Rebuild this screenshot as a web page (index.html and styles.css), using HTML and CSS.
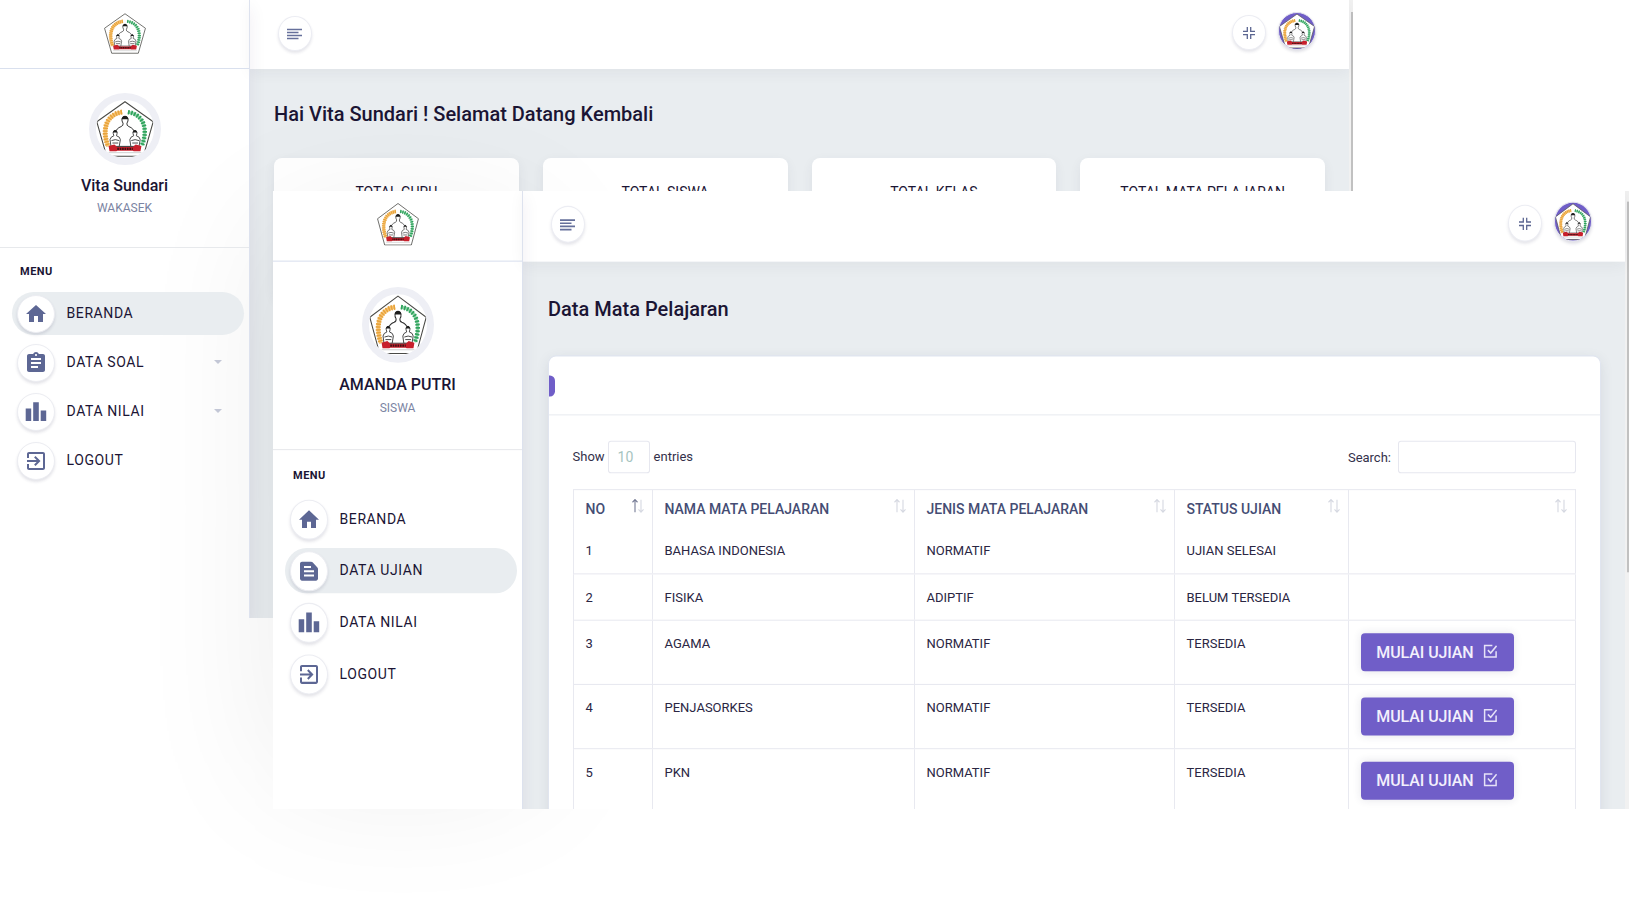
FILE: index.html
```html
<!DOCTYPE html>
<html lang="id">
<head>
<meta charset="utf-8">
<title>Ujian Online</title>
<link rel="stylesheet" href="styles.css">
</head>
<body>
<svg class="defs" width="0" height="0">
  <symbol id="crest" viewBox="0 0 60 58">
    <path d="M30 .8 59.200 21.500 49 57.200H11L.8 21.500Z" fill="#fff" stroke="#4a4a46" stroke-width="1.100"/>
    <path d="M27 11.500C10 14 6 30 12.500 47" fill="none" stroke="#f6c374" stroke-width="4"/>
    <path d="M27 11.500C10 14 6 30 12.500 47" fill="none" stroke="#e8a33a" stroke-width="5.200" stroke-dasharray="1.500 1.300"/>
    <path d="M33 11.500C50 14 54 30 47.500 46" fill="none" stroke="#8fd0a8" stroke-width="3"/>
    <path d="M33 11.500C50 14 54 30 47.500 46" fill="none" stroke="#2fa35c" stroke-width="4.600" stroke-dasharray="1.700 1.500"/>
    <g stroke-linejoin="round">
      <path d="M18.500 47C19 35 19 29 26 26.500Q28.500 25.500 28 23C26 20 26.500 16 30 16S34 20 32 23Q31.500 25.500 34 26.500C41 29 41 35 41.500 47Z" fill="#fff" stroke="#2c2c2c" stroke-width="1"/>
      <path d="M26.600 18.800C27 14 33 14 33.400 18.800Z" fill="#1d1d1d"/>
      <g fill="#fff" stroke="#333" stroke-width=".9">
        <path d="M15.500 47 14.500 40Q15 37 18.500 36 16.500 31 19.800 30.500 23 31 21.200 36 25 37 25.200 40L24 47Z"/>
        <path d="M36 47 35 40Q35.500 37 39 36 37 31 40.300 30.500 43.500 31 41.700 36 45.500 37 45.700 40L44.500 47Z"/>
        <path d="M16 41q4-2 8 0M36.500 41q4-2 8 0M17 43.500h6M37.500 43.500h6"/>
      </g>
      <path d="M17.300 32.500Q19.800 27.500 22.300 32.500ZM37.800 32.500Q40.300 27.500 42.800 32.500Z" fill="#1d1d1d"/>
    </g>
    <path d="M13 46.500 19 45 22 47.500H38L41 45 47 46.500 46 52H39L38 51.500H22L21 52H14Z" fill="#c8202c"/>
    <path d="M22 49.500H38" stroke="#3c1114" stroke-width="2.200" stroke-dasharray="1.700 .8"/>
    <path d="M13 53.500H47" stroke="#aaa" stroke-width=".6"/>
  </symbol>
  <symbol id="home" viewBox="0 0 24 24"><path d="M10 20v-6h4v6h5v-8h3L12 3 2 12h3v8z"/></symbol>
  <symbol id="clipboard" viewBox="0 0 24 24"><path d="M19 3h-4.180C14.400 1.840 13.300 1 12 1c-1.300 0-2.400.84-2.820 2H5c-1.100 0-2 .9-2 2v14c0 1.100.9 2 2 2h14c1.100 0 2-.9 2-2V5c0-1.100-.9-2-2-2zm-7 0c.55 0 1 .45 1 1s-.45 1-1 1-1-.45-1-1 .45-1 1-1zm2 14H7v-2h7v2zm3-4H7v-2h10v2zm0-4H7V7h10v2z"/></symbol>
  <symbol id="chart" viewBox="0 0 24 24"><path d="M1.700 8.600h5.500V21H1.700zM9.200 2.200h5.600V21H9.200zM16.700 10.500h5.500V21h-5.500z"/></symbol>
  <symbol id="exit" viewBox="0 0 24 24"><path d="M10.090 15.590 11.500 17l5-5-5-5-1.410 1.410L12.670 11H3v2h9.670l-2.580 2.590zM19 3H5c-1.110 0-2 .9-2 2v4h2V5h14v14H5v-4H3v4c0 1.100.89 2 2 2h14c1.100 0 2-.9 2-2V5c0-1.100-.9-2-2-2z"/></symbol>
  <symbol id="doc" viewBox="0 0 24 24"><path d="M20.410 8.410l-4.830-4.830c-.37-.37-.88-.58-1.410-.58H5c-1.100 0-2 .9-2 2v14c0 1.100.9 2 2 2h14c1.100 0 2-.9 2-2V9.830c0-.53-.21-1.040-.59-1.420zM7 7h7v2H7V7zm10 10H7v-2h10v2zm0-4H7v-2h10v2z"/></symbol>
  <symbol id="lines" viewBox="0 0 15 12"><path d="M0 1.500h15M0 4.500h11.500M0 7.500h15M0 10.500h11.500" stroke="#66709b" stroke-width="1.600"/></symbol>
  <symbol id="shrink" viewBox="0 0 12 12"><path d="M0 4.300h4.300V0M7.700 0v4.300H12M0 7.700h4.300V12M7.700 12V7.700H12" fill="none" stroke="#5b6691" stroke-width="1.300"/></symbol>
  <symbol id="check" viewBox="0 0 15 15"><path d="M9.500 1.700H1.200v11.600h12.300V7.500M4.700 6.300l3 3 6.300-7.300" fill="none" stroke="#e6e2f7" stroke-width="1.600"/></symbol>
  <symbol id="sort" viewBox="0 0 12 14"><path stroke="currentColor" d="M3 13V1M.5 3.500 3 1l2.500 2.500"/><path d="M9 1v11.500M6.500 10.300 9 12.800l2.500-2.500"/></symbol>
</svg>

<div class="window window-back">
  <div class="screen">
    <aside class="sidebar">
      <div class="brand"><svg class="brand-logo"><use href="#crest"/></svg></div>
      <div class="profile">
        <div class="photo"><svg><use href="#crest"/></svg></div>
        <div class="name">Vita Sundari</div>
        <div class="role">WAKASEK</div>
      </div>
      <div class="menu-title">MENU</div>
      <nav class="menu">
        <a class="item active"><span class="bubble"><svg><use href="#home"/></svg></span><span class="label">BERANDA</span></a>
        <a class="item"><span class="bubble"><svg><use href="#clipboard"/></svg></span><span class="label">DATA SOAL</span><i class="caret"></i></a>
        <a class="item"><span class="bubble"><svg><use href="#chart"/></svg></span><span class="label">DATA NILAI</span><i class="caret"></i></a>
        <a class="item"><span class="bubble"><svg><use href="#exit"/></svg></span><span class="label">LOGOUT</span></a>
      </nav>
    </aside>
    <main class="content">
      <header class="topbar">
        <span class="round"><svg class="i-lines"><use href="#lines"/></svg></span>
        <div class="tools">
          <span class="round"><svg class="i-shrink"><use href="#shrink"/></svg></span>
          <span class="user"><svg><use href="#crest"/></svg></span>
        </div>
      </header>
      <h1 class="title">Hai Vita Sundari ! Selamat Datang Kembali</h1>
      <div class="stats">
        <div class="stat">TOTAL GURU</div>
        <div class="stat">TOTAL SISWA</div>
        <div class="stat">TOTAL KELAS</div>
        <div class="stat">TOTAL MATA PELAJARAN</div>
      </div>
    </main>
    <div class="scrollbar"><div class="thumb"></div></div>
  </div>
</div>

<div class="glow"></div>

<div class="window window-front">
  <div class="screen">
    <aside class="sidebar">
      <div class="brand"><svg class="brand-logo"><use href="#crest"/></svg></div>
      <div class="profile">
        <div class="photo"><svg><use href="#crest"/></svg></div>
        <div class="name">AMANDA PUTRI</div>
        <div class="role">SISWA</div>
      </div>
      <div class="menu-title">MENU</div>
      <nav class="menu">
        <a class="item"><span class="bubble"><svg><use href="#home"/></svg></span><span class="label">BERANDA</span></a>
        <a class="item active"><span class="bubble"><svg><use href="#doc"/></svg></span><span class="label">DATA UJIAN</span></a>
        <a class="item"><span class="bubble"><svg><use href="#chart"/></svg></span><span class="label">DATA NILAI</span></a>
        <a class="item"><span class="bubble"><svg><use href="#exit"/></svg></span><span class="label">LOGOUT</span></a>
      </nav>
    </aside>
    <main class="content">
      <header class="topbar">
        <span class="round"><svg class="i-lines"><use href="#lines"/></svg></span>
        <div class="tools">
          <span class="round"><svg class="i-shrink"><use href="#shrink"/></svg></span>
          <span class="user"><svg><use href="#crest"/></svg></span>
        </div>
      </header>
      <h1 class="title">Data Mata Pelajaran</h1>
      <section class="card">
        <div class="card-head"><span class="chip"></span></div>
        <div class="card-body">
          <div class="filters">
            <div class="length"><span class="word">Show</span><span class="select">10</span><span class="word">entries</span></div>
            <div class="search">Search: <input class="search-box" type="text"></div>
          </div>
          <table class="grid">
            <colgroup><col class="c-no"><col class="c-name"><col class="c-kind"><col class="c-status"><col></colgroup>
            <thead>
              <tr>
                <th class="sorted"><div class="th">NO<svg><use href="#sort"/></svg></div></th>
                <th><div class="th">NAMA MATA PELAJARAN<svg><use href="#sort"/></svg></div></th>
                <th><div class="th">JENIS MATA PELAJARAN<svg><use href="#sort"/></svg></div></th>
                <th><div class="th">STATUS UJIAN<svg><use href="#sort"/></svg></div></th>
                <th><div class="th"><span></span><svg><use href="#sort"/></svg></div></th>
              </tr>
            </thead>
            <tbody>
              <tr><td>1</td><td>BAHASA INDONESIA</td><td>NORMATIF</td><td>UJIAN SELESAI</td><td></td></tr>
              <tr><td>2</td><td>FISIKA</td><td>ADIPTIF</td><td>BELUM TERSEDIA</td><td></td></tr>
              <tr class="tall"><td>3</td><td>AGAMA</td><td>NORMATIF</td><td>TERSEDIA</td><td><a class="btn">MULAI UJIAN<svg><use href="#check"/></svg></a></td></tr>
              <tr class="tall"><td>4</td><td>PENJASORKES</td><td>NORMATIF</td><td>TERSEDIA</td><td><a class="btn">MULAI UJIAN<svg><use href="#check"/></svg></a></td></tr>
              <tr class="tall"><td>5</td><td>PKN</td><td>NORMATIF</td><td>TERSEDIA</td><td><a class="btn">MULAI UJIAN<svg><use href="#check"/></svg></a></td></tr>
            </tbody>
          </table>
        </div>
      </section>
    </main>
    <div class="scrollbar"><div class="thumb"></div></div>
  </div>
</div>
</body>
</html>
```
FILE: styles.css
```css
* { box-sizing: border-box; }
body {
  margin: 0;
  width: 1640px;
  height: 906px;
  position: relative;
  overflow: hidden;
  background: #fff;
  font-family: Roboto, "Liberation Sans", sans-serif;
  color: #1b1534;
}
svg { display: block; }
.defs { position: absolute; }

/* Overlapping windows */
.window { position: absolute; overflow: hidden; height: 618px; }
.window-back { left: 0; top: 0; width: 1353px; }
.window-front { left: 273px; top: 191px; width: 1356px; }
.glow {
  position: absolute;
  left: 273px;
  top: 221px;
  width: 260px;
  height: 560px;
  box-shadow: 0 0 140px rgba(0, 0, 0, .08);
}
.screen { display: flex; height: 618px; background: #fff; }
.window-front .screen {
  transform: scaleY(1.053);
  transform-origin: 0 0;
  margin-top: -2.5px;
}

/* Sidebar */
.sidebar {
  width: 250px;
  flex: none;
  border-right: 1px solid #dde2ee;
  position: relative;
  z-index: 2;
  box-shadow: 0 8px 17px rgba(50, 30, 80, .07);
}
.brand {
  height: 69px;
  border-bottom: 1px solid #d9e0ee;
  display: flex;
  justify-content: center;
  padding-top: 13px;
}
.brand-logo { width: 42px; height: 41px; }
.profile {
  height: 179px;
  border-bottom: 1px solid #e7e9ec;
  display: flex;
  flex-direction: column;
  align-items: center;
  padding-top: 24px;
}
.photo {
  width: 72px;
  height: 72px;
  border-radius: 50%;
  border: 7px solid #eeeff5;
  overflow: hidden;
  background: #fff;
}
.photo svg { width: 58px; height: 58px; }
.name { margin-top: 11px; font-size: 16px; font-weight: 500; line-height: 20px; }
.role { margin-top: 4px; font-size: 12px; line-height: 16px; color: #7b84a3; }
.menu-title {
  margin: 15px 0 13px 20px;
  padding-top: 1px;
  height: 16px;
  font-size: 11px;
  font-weight: 700;
  line-height: 16px;
  letter-spacing: .5px;
}
.menu { display: flex; flex-direction: column; gap: 6px; padding: 0 5px 0 12px; }
.item {
  height: 43px;
  border-radius: 22px;
  display: flex;
  align-items: center;
  gap: 11.500px;
  padding-left: 5px;
  font-size: 14px;
  letter-spacing: .6px;
}
.label { padding-bottom: 1px; }
.active { background: #e9edf0; }
.bubble {
  width: 38px;
  height: 38px;
  margin-top: 1px;
  border-radius: 50%;
  border: 1px solid #ecedf2;
  background: #fff;
  box-shadow: 0 2px 3px rgba(40, 40, 80, .13);
  display: flex;
  align-items: center;
  justify-content: center;
}
.bubble svg { width: 24px; height: 24px; fill: #5d6794; }
.caret {
  margin-left: auto;
  margin-right: 22px;
  margin-bottom: 2px;
  border: 4px solid transparent;
  border-top-color: #c3c7d6;
  border-bottom: 0;
}

/* Content area */
.content { flex: 1; min-width: 0; background: #e9edf0; }
.topbar {
  height: 69px;
  background: #fff;
  display: flex;
  justify-content: space-between;
  padding: 16px 33px 0 28px;
  position: relative;
  box-shadow: 0 4px 14px rgba(40, 40, 60, .05);
}
.round {
  width: 34px;
  height: 35px;
  border-radius: 50%;
  border: 1px solid #ecedf3;
  background: #fff;
  box-shadow: 0 2px 3px rgba(40, 40, 80, .12);
  display: flex;
  align-items: center;
  justify-content: center;
}
.i-lines { width: 15px; height: 12px; margin-right: 1px; }
.i-shrink { width: 12px; height: 12px; }
.tools { display: flex; gap: 12px; margin-top: -1px; }
.user {
  width: 38px;
  height: 38px;
  margin-top: -3px;
  border-radius: 50%;
  border: 1px solid #e5e5ef;
  overflow: hidden;
  background: #705ec8;
  box-shadow: 0 2px 3px rgba(40, 40, 80, .15);
}
.user svg { width: 36px; height: 36px; }
.title { margin: 31px 0 0 24px; font-size: 20px; font-weight: 500; line-height: 28px; }
.window-front .title { margin-left: 25px; }
.stats {
  display: grid;
  grid-template-columns: repeat(4, 1fr);
  gap: 24px;
  margin: 30px 24px 0;
}
.stat {
  height: 140px;
  border-radius: 8px;
  background: #fff;
  box-shadow: 0 4px 12px rgba(50, 60, 90, .07);
  padding-top: 24px;
  text-align: center;
  font-size: 14px;
  line-height: 20px;
}
.scrollbar { width: 4px; flex: none; background: #f1f1f1; padding: 12px 0 0 2px; }
.thumb { height: 606px; background: #c1c1c1; }
.window-front .thumb { height: 352px; }

/* Exam table card */
.card {
  margin: 30px 24px 0 25px;
  height: 520px;
  border: 1px solid #e0e5ef;
  border-radius: 8px;
  background: #fff;
  box-shadow: 0 4px 12px rgba(50, 60, 90, .1);
}
.card-head { height: 56px; border-bottom: 1px solid #e9ebf0; padding-top: 18px; }
.chip { display: block; width: 6px; height: 20px; background: #705ec8; border-radius: 0 5px 5px 0; }
.card-body { padding: 24px 24px 0 23.500px; font-size: 13px; color: #2a2643; }
.filters { display: flex; justify-content: space-between; color: #33304a; }
.length, .search { display: flex; align-items: center; }
.word { padding-bottom: 3px; }
.select {
  width: 42px;
  height: 31px;
  margin: 0 4px 0 3px;
  border: 1px solid #e6e7ef;
  border-radius: 3px;
  font-size: 14px;
  line-height: 29px;
  padding-left: 9px;
  color: #a6c4bf;
}
.search-box {
  width: 178px;
  height: 31px;
  margin-left: 7px;
  border: 1px solid #e6e7ef;
  border-radius: 3px;
  background: #fff;
}
.grid {
  width: 1003px;
  margin-top: 14.500px;
  table-layout: fixed;
  border-collapse: collapse;
  border: 1px solid #e8e9f0;
}
.c-no { width: 79px; }
.c-name { width: 262px; }
.c-kind { width: 260px; }
.c-status { width: 174px; }
.grid th, .grid td {
  border-left: 1px solid #e8e9f0;
  text-align: left;
  vertical-align: top;
  padding: 0 12px;
}
.grid th { height: 36px; font-size: 14px; font-weight: 500; color: #454d74; }
.th { display: flex; justify-content: space-between; height: 36px; line-height: 37px; margin-right: -4px; }
.th svg {
  width: 12px;
  height: 14px;
  margin-top: 8px;
  fill: none;
  color: #d5d8e1;
  stroke: #d5d8e1;
  stroke-width: 1.100;
}
.sorted .th svg { color: #757b95; }
.grid td { height: 44px; padding-top: 12px; border-bottom: 1px solid #e8e9f0; line-height: 20px; }
.grid .tall td { height: 61px; }
.btn {
  width: 153px;
  height: 36px;
  border-radius: 4px;
  background: #705ec8;
  color: #f3f0fc;
  font-size: 16px;
  font-weight: 500;
  letter-spacing: -.1px;
  display: flex;
  align-items: center;
  justify-content: center;
  gap: 9px;
  box-shadow: 0 0 8px rgba(40, 40, 80, .12);
}
.btn svg { width: 15px; height: 14px; margin-top: -2px; }
```
